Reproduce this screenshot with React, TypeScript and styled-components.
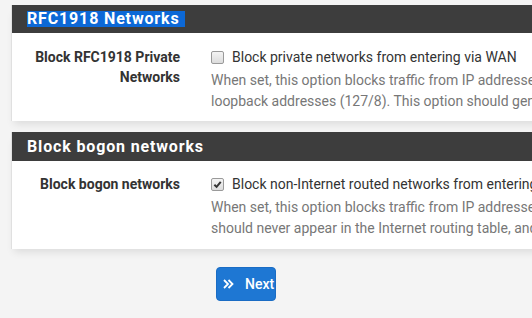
import styled, { createGlobalStyle } from 'styled-components'

const Global = createGlobalStyle`
  html, body {
    margin: 0;
    padding: 0;
    overflow: hidden;
    background: #f4f4f4;
  }
  body {
    font-family: Roboto, "Liberation Sans", sans-serif;
    font-size: 14px;
    color: #333;
  }
`

const Page = styled.div`
  padding: 5px 0 0 11px;
  width: 1100px;
`

const Panel = styled.section`
  background: #fff;
  border-left: 1px solid #e0e0e0;
  box-shadow: 0 6px 8px -3px rgba(0, 0, 0, 0.1);
  margin-bottom: 11px;

  & + & {
    margin-top: 1px;
  }
`

const PanelHeading = styled.div<{ tall?: boolean }>`
  background: #3d3d3d;
  height: ${({ tall }) => (tall ? 29 : 28)}px;
  display: flex;
  align-items: center;
  padding-left: 15px;
`

const PanelTitle = styled.h2<{ selected?: boolean }>`
  margin: 0;
  font-size: 16px;
  font-weight: 700;
  letter-spacing: 0.85px;
  line-height: 16px;
  color: #fff;
  padding: 0 5px 0 0;
  background: ${({ selected }) => (selected ? '#0c68d6' : 'transparent')};
`

const PanelBody = styled.div<{ top: number; bottom: number }>`
  padding: ${({ top, bottom }) => `${top}px 0 ${bottom}px`};
`

const FormRow = styled.div`
  display: flex;
`

const Label = styled.div`
  width: 168px;
  flex-shrink: 0;
  text-align: right;
  font-weight: 700;
  line-height: 20px;
  padding-right: 31px;
`

const Field = styled.div`
  flex: 1;
`

const CheckLine = styled.label`
  display: flex;
  align-items: center;
  line-height: 20px;
  height: 20px;
`

const Box = styled.span`
  width: 11px;
  height: 11px;
  border: 1px solid #9a9a9a;
  border-radius: 2px;
  background: linear-gradient(#f4f4f4, #dcdcdc);
  margin: 0 8px 0 0;
  display: inline-flex;
  align-items: center;
  justify-content: center;
`

const Help = styled.p`
  margin: 3px 0 0;
  color: #777;
  line-height: 21px;
  white-space: nowrap;
`

const ButtonRow = styled.div`
  padding: 7px 0 0 205px;
`

const NextButton = styled.button`
  display: inline-flex;
  align-items: center;
  gap: 11px;
  width: 60px;
  height: 34px;
  padding: 0 0 0 6px;
  border: 1px solid #1a6cc4;
  border-radius: 4px;
  background: #1e77d3;
  color: #fff;
  font-family: Roboto, "Liberation Sans", sans-serif;
  font-size: 14px;
  font-weight: 500;
`

const Check = () => (
  <svg width="9" height="9" viewBox="0 0 10 10">
    <path d="M1.5 5.2 L4 7.6 L8.6 2" stroke="#333" strokeWidth="2.2" fill="none" />
  </svg>
)

const Chevrons = () => (
  <svg width="11" height="10" viewBox="0 0 11 10">
    <path d="M1 1 L5 5 L1 9 M5.5 1 L9.5 5 L5.5 9" stroke="#fff" strokeWidth="1.8" fill="none" />
  </svg>
)

export default function App() {
  return (
    <Page>
      <Global />
      <Panel>
        <PanelHeading>
          <PanelTitle selected>RFC1918 Networks</PanelTitle>
        </PanelHeading>
        <PanelBody top={14} bottom={9}>
          <FormRow>
            <Label>
              Block RFC1918 Private
              <br />
              Networks
            </Label>
            <Field>
              <CheckLine>
                <Box />
                Block private networks from entering via WAN
              </CheckLine>
              <Help>
                When set, this option blocks traffic from IP addresses that are reserved for private networks per RFC 1918 (10/8, 172.16/12, 192.168/16) and unique local addresses (fc00::/7) as well as
                <br />
                loopback addresses (127/8). This option should generally be left turned on, unless the WAN network lies in such a private address space, too.
              </Help>
            </Field>
          </FormRow>
        </PanelBody>
      </Panel>
      <Panel>
        <PanelHeading tall>
          <PanelTitle>Block bogon networks</PanelTitle>
        </PanelHeading>
        <PanelBody top={13} bottom={10}>
          <FormRow>
            <Label>Block bogon networks</Label>
            <Field>
              <CheckLine>
                <Box>
                  <Check />
                </Box>
                Block non-Internet routed networks from entering via WAN
              </CheckLine>
              <Help>
                When set, this option blocks traffic from IP addresses that are reserved (but not RFC 1918) or not yet assigned by IANA. Bogons are prefixes that
                <br />
                should never appear in the Internet routing table, and obviously should not appear as the source address in any packets received.
              </Help>
            </Field>
          </FormRow>
        </PanelBody>
      </Panel>
      <ButtonRow>
        <NextButton>
          <Chevrons />
          Next
        </NextButton>
      </ButtonRow>
    </Page>
  )
}
